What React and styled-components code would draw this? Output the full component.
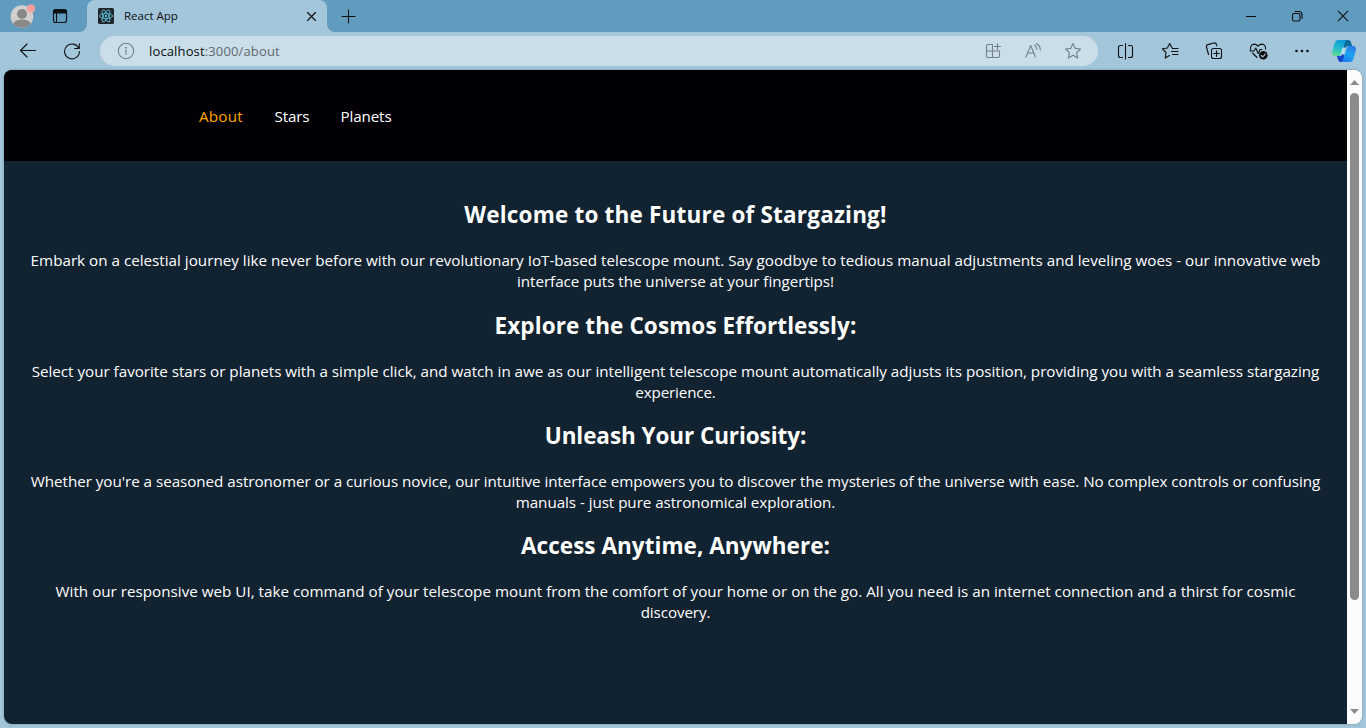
import React from "react";
import styled, { createGlobalStyle } from "styled-components";

const GlobalStyle = createGlobalStyle`
  * { box-sizing: border-box; }
  body { margin: 0; overflow: hidden; font-family: "Open Sans", "Noto Sans", sans-serif; }
`;

const Window = styled.div`
  width: 1366px;
  height: 728px;
  display: flex;
  flex-direction: column;
  background: #a3c6db;
  overflow: hidden;
`;

const TitleBar = styled.header`
  height: 32px;
  flex: none;
  display: flex;
  background: #a3c6db;
`;

const TitleLeft = styled.div`
  width: 87px;
  display: flex;
  align-items: center;
  padding-left: 10px;
  gap: 17px;
  background: #619cbf;
  border-bottom-right-radius: 8px;
`;

const TabWrap = styled.div`
  width: 240px;
  background: #619cbf;
`;

const Tab = styled.div`
  height: 32px;
  display: flex;
  align-items: center;
  padding: 0 10px 0 11px;
  background: #a3c6db;
  border-radius: 8px 8px 0 0;
`;

const TabTitle = styled.span`
  flex: 1;
  margin-left: 10px;
  padding-bottom: 2px;
  font-size: 11.5px;
  color: #0b0f12;
  white-space: nowrap;
`;

const TitleRight = styled.div`
  flex: 1;
  display: flex;
  align-items: center;
  padding: 0 17px 0 14px;
  background: #619cbf;
  border-bottom-left-radius: 8px;
`;

const WindowControls = styled.div`
  margin-left: auto;
  display: flex;
  gap: 34px;
`;

const ToolBar = styled.div`
  height: 38px;
  flex: none;
  display: flex;
  align-items: center;
  padding-left: 19px;
`;

const AddressBar = styled.div`
  width: 998px;
  height: 30px;
  flex: none;
  margin-left: 19px;
  display: flex;
  align-items: center;
  padding: 0 16px 0 17px;
  border-radius: 15px;
  background: #cadee9;
`;

const Url = styled.span`
  flex: 1;
  margin-left: 14px;
  font-size: 13px;
  letter-spacing: 0.14px;
  color: #5f686e;
  b { font-weight: 400; color: #0b0f12; }
`;

const AddressActions = styled.div`
  display: flex;
  gap: 22px;
`;

const ToolActions = styled.div`
  display: flex;
  flex: none;
  align-items: center;
  margin-left: 18px;
  gap: 24px;
`;

const Glyph = styled.svg`
  display: block;
  flex: none;
  width: ${(p) => p.$w || 18}px;
  height: ${(p) => p.$h || p.$w || 18}px;
  margin-left: ${(p) => p.$ml || 0}px;
  fill: none;
  stroke: ${(p) => p.$color || "#0c1013"};
  stroke-width: ${(p) => p.$stroke || 1.1};
  stroke-linecap: round;
  stroke-linejoin: round;
`;

const Viewport = styled.div`
  width: 1358px;
  height: 654px;
  margin-left: 4px;
  display: flex;
  border-radius: 8px;
  overflow: hidden;
  box-shadow: 0 0 3px rgba(40, 75, 95, 0.4);
`;

const Page = styled.main`
  width: 1343px;
  background: #112231;
`;

const Nav = styled.nav`
  height: 91px;
  display: flex;
  align-items: center;
  gap: 31px;
  padding: 2px 0 0 195px;
  background: #020004;
`;

const NavLink = styled.a`
  width: ${(p) => p.$width}px;
  font-size: 15.2px;
  line-height: 21px;
  letter-spacing: ${(p) => p.$spacing}px;
  white-space: nowrap;
  color: ${(p) => (p.$active ? "#ffa500" : "#fff")};
`;

const Content = styled.div`
  padding-top: 39.4px;
`;

const Section = styled.section`
  margin-bottom: 18.3px;
  text-align: center;
  color: #fff;
`;

const Heading = styled.h2`
  margin: 0 0 20px;
  font-size: 22.5px;
  font-weight: 700;
  line-height: 30px;
  letter-spacing: ${(p) => p.$spacing}px;
`;

const Paragraph = styled.p`
  margin: 0;
  font-size: 15.2px;
  line-height: 21px;
`;

const Line = styled.span`
  display: block;
  white-space: nowrap;
  letter-spacing: ${(p) => p.$spacing}px;
`;

const ScrollBar = styled.div`
  width: 15px;
  display: flex;
  flex-direction: column;
  align-items: center;
  background: #fcfcfc;
  padding: 10px 0 10px;
`;

const Thumb = styled.div`
  width: 9px;
  height: 507px;
  margin-top: 8px;
  margin-bottom: auto;
  border-radius: 5px;
  background: #8b8b8b;
`;

const Arrow = styled.svg`
  display: block;
  width: 9px;
  height: 5px;
  fill: #8b8b8b;
`;

const sections = [
  {
    title: ["Welcome to the Future of Stargazing!", 0.19],
    lines: [
      ["Embark on a celestial journey like never before with our revolutionary IoT-based telescope mount. Say goodbye to tedious manual adjustments and leveling woes - our innovative web", 0.011],
      ["interface puts the universe at your fingertips!", -0.03],
    ],
  },
  {
    title: ["Explore the Cosmos Effortlessly:", 0.1],
    lines: [
      ["Select your favorite stars or planets with a simple click, and watch in awe as our intelligent telescope mount automatically adjusts its position, providing you with a seamless stargazing", -0.011],
      ["experience.", -0.15],
    ],
  },
  {
    title: ["Unleash Your Curiosity:", -0.08],
    lines: [
      ["Whether you're a seasoned astronomer or a curious novice, our intuitive interface empowers you to discover the mysteries of the universe with ease. No complex controls or confusing", -0.035],
      ["manuals - just pure astronomical exploration.", -0.05],
    ],
  },
  {
    title: ["Access Anytime, Anywhere:", 0.04],
    lines: [
      ["With our responsive web UI, take command of your telescope mount from the comfort of your home or on the go. All you need is an internet connection and a thirst for cosmic", 0.012],
      ["discovery.", -0.1],
    ],
  },
];

const Avatar = () => (
  <Glyph $w={25} viewBox="0 0 25 25">
    <g stroke="none">
      <circle cx="12" cy="12.500" r="11.300" fill="#d2d0ce" />
      <circle cx="12" cy="10" r="5" fill="#8a8886" />
      <path d="M3.400 19.800c1.200-3 4.600-4.300 8.600-4.300s7.400 1.300 8.600 4.300a11.300 11.300 0 0 1-17.200 0z" fill="#8a8886" />
      <circle cx="21" cy="4.500" r="4" fill="#f8a09c" />
    </g>
  </Glyph>
);

const Workspaces = () => (
  <Glyph $w={16} viewBox="0 0 16 16">
    <rect x="1.500" y="1.500" width="13" height="13" rx="2.300" />
    <path d="M1.500 5V4a2.500 2.500 0 0 1 2.500-2.500h8A2.500 2.500 0 0 1 14.500 4v1z" fill="#0c1013" />
    <path d="M4.500 5v9" />
  </Glyph>
);

const ReactLogo = () => (
  <Glyph $w={16} viewBox="0 0 16 16" $color="#5bc4dc" $stroke={0.85}>
    <rect width="16" height="16" rx="1.500" fill="#20242b" stroke="none" />
    <ellipse cx="8" cy="8" rx="6.700" ry="2.600" />
    <ellipse cx="8" cy="8" rx="6.700" ry="2.600" transform="rotate(60 8 8)" />
    <ellipse cx="8" cy="8" rx="6.700" ry="2.600" transform="rotate(120 8 8)" />
    <circle cx="8" cy="8" r="1.200" fill="#5bc4dc" stroke="none" />
  </Glyph>
);

const STAR = "M9 1.500l2.300 4.900 5.200.6-3.900 3.600 1 5.300L9 13.300l-4.600 2.600 1-5.300L1.500 7l5.200-.6z";

const Copilot = () => (
  <Glyph $w={26} $ml={-5} viewBox="0 0 26 26">
    <defs>
      <linearGradient id="cpA" x1="0.600" y1="0" x2="0.300" y2="1">
        <stop offset="0" stopColor="#0f9bd8" />
        <stop offset="0.500" stopColor="#20b9cf" />
        <stop offset="1" stopColor="#5bdc8c" />
      </linearGradient>
      <linearGradient id="cpB" x1="0.700" y1="0" x2="0.300" y2="1">
        <stop offset="0" stopColor="#2b7be4" />
        <stop offset="0.500" stopColor="#1ba3f5" />
        <stop offset="1" stopColor="#1b7cf0" />
      </linearGradient>
    </defs>
    <g stroke="none">
      <path d="M12 2h5c1.800 0 2.500 1 3 2.500L21.200 8h-3.500c-2 0-2.700.6-3.200 2L12.500 9z" fill="#0a6c9c" />
      <path d="M13 24H9.500c-1.500 0-2-1-2.500-2.500L5.800 18H8.500c1.500 0 2.500-.6 3-2l2 1z" fill="#1745c8" />
      <path d="M7.500 2h9c-1.500 0-2.200 1.200-2.700 2.700L10.800 15C10.200 17.300 9.500 18 7.500 18H4.500C1.500 18 .5 16 1.300 13L3.500 5.500C4.200 3 5.500 2 7.500 2z" fill="url(#cpA)" />
      <path d="M18.500 24H9.500c1.500 0 2.200-1.200 2.700-2.700L15.400 11C16 8.700 17 8 18.500 8H21.500c3 0 4 2 3.200 5l-2.200 7.500C21.800 23 20.500 24 18.500 24z" fill="url(#cpB)" />
      <path d="M14.300 10l-3 .3-2.200 7.200c1.200-.4 1.700-1.200 2.100-2.500l1.500 1.800z" fill="#b5dcec" />
    </g>
  </Glyph>
);

const GREY = "#747f86";

export default function App() {
  return (
    <>
      <GlobalStyle />
      <Window>
        <TitleBar>
          <TitleLeft>
            <Avatar />
            <Workspaces />
          </TitleLeft>
          <TabWrap>
            <Tab>
              <ReactLogo />
              <TabTitle>React App</TabTitle>
              <Glyph $w={11} viewBox="0 0 11 11"><path d="M1.500 1.500l8 8M9.500 1.500l-8 8" /></Glyph>
            </Tab>
          </TabWrap>
          <TitleRight>
            <Glyph $w={15} viewBox="0 0 15 15"><path d="M7.500 1v13M1 7.500h13" /></Glyph>
            <WindowControls>
              <Glyph $w={12} viewBox="0 0 12 12"><path d="M1.500 6.500h9" /></Glyph>
              <Glyph $w={12} viewBox="0 0 12 12">
                <rect x="1.500" y="3.500" width="7.500" height="7.500" rx="1.500" />
                <path d="M4 1.500h4a3 3 0 0 1 3 3v4" />
              </Glyph>
              <Glyph $w={12} viewBox="0 0 12 12"><path d="M1.200 1.200l9.600 9.600M10.800 1.200L1.200 10.800" /></Glyph>
            </WindowControls>
          </TitleRight>
        </TitleBar>
        <ToolBar>
          <Glyph viewBox="0 0 18 18"><path d="M16.500 8.500H1.500M8 2L1.500 8.500 8 15" /></Glyph>
          <Glyph $ml={26} viewBox="0 0 18 18"><path d="M15.800 6.500A7.400 7.400 0 1 0 16.400 9.500M16.300 1.800v4.700h-4.700" /></Glyph>
          <AddressBar>
            <Glyph viewBox="0 0 18 18" $color={GREY}>
              <circle cx="9" cy="9" r="7.700" />
              <path d="M9 8.300v4.200" />
              <circle cx="9" cy="5.700" r="0.400" fill={GREY} />
            </Glyph>
            <Url><b>localhost</b>:3000/about</Url>
            <AddressActions>
              <Glyph viewBox="0 0 18 18" $color={GREY}>
                <path d="M8.500 2.500H4A1.500 1.500 0 0 0 2.500 4v10A1.500 1.500 0 0 0 4 15.500h10a1.500 1.500 0 0 0 1.500-1.500V9H2.500M8.500 2.500v13M13.500 1.500v6M10.500 4.500h6" />
              </Glyph>
              <Glyph viewBox="0 0 18 18" $color={GREY}>
                <path d="M2 15L6.700 3.500 11.400 15M3.700 11h6M10.500 3.300c1.500.8 2.200 2.200 2.200 4M12 1.500c2.700 1 4.200 3.200 4.300 6.500" />
              </Glyph>
              <Glyph viewBox="0 0 18 18" $color={GREY}><path d={STAR} /></Glyph>
            </AddressActions>
          </AddressBar>
          <ToolActions>
            <Glyph $w={20} viewBox="0 0 20 20">
              <path d="M6.500 4.500H4.500A2 2 0 0 0 2.500 6.500v8a2 2 0 0 0 2 2h2M12.500 4.500h2a2 2 0 0 1 2 2v8a2 2 0 0 1-2 2h-2M9.500 2.500v15.500" />
            </Glyph>
            <Glyph $w={20} viewBox="0 0 20 20">
              <path d="M12 6.800L9.700 2.500 7.400 7 2.400 7.800 6 11.500 5.200 17l4.300-2.400M12.500 7.500H18M11.500 10.500H18M12.500 13.500H18" />
            </Glyph>
            <Glyph $w={20} viewBox="0 0 20 20">
              <rect x="7.500" y="7.500" width="10" height="10" rx="2" />
              <path d="M12.500 9.800v5.400M9.800 12.500h5.400M4.500 13.500L2.500 6a2 2 0 0 1 1.400-2.400L10 2a2 2 0 0 1 2.400 1.400l.4 1.400" />
            </Glyph>
            <Glyph $w={20} viewBox="0 0 20 20">
              <path d="M2.800 9c-1-2.600.3-5.700 3.200-5.900 1.700 0 3 .8 4 2 1-1.200 2.300-2 4-2 2.500.1 4 2.500 3.500 5M2 10h4l1.800-3 2.400 5.500L12 8.500h2M4.500 12l4.500 4.500" />
              <circle cx="15.300" cy="14.300" r="4.300" fill="#0c1013" stroke="none" />
              <path d="M13.300 14.500l1.400 1.400 2.700-2.800" stroke="#a3c6db" />
            </Glyph>
            <Glyph $w={20} viewBox="0 0 20 20">
              <g fill="#0c1013" stroke="none">
                <circle cx="4.500" cy="10" r="1.300" /><circle cx="10" cy="10" r="1.300" /><circle cx="15.500" cy="10" r="1.300" />
              </g>
            </Glyph>
            <Copilot />
          </ToolActions>
        </ToolBar>
        <Viewport>
          <Page>
            <Nav>
              <NavLink $active $width={44.5} $spacing={0.2}>About</NavLink>
              <NavLink $width={35} $spacing={-0.15}>Stars</NavLink>
              <NavLink $width={51} $spacing={-0.13}>Planets</NavLink>
            </Nav>
            <Content>
              {sections.map((s) => (
                <Section key={s.title[0]}>
                  <Heading $spacing={s.title[1]}>{s.title[0]}</Heading>
                  <Paragraph>
                    {s.lines.map(([text, spacing]) => (
                      <Line key={text} $spacing={spacing}>{text}</Line>
                    ))}
                  </Paragraph>
                </Section>
              ))}
            </Content>
          </Page>
          <ScrollBar>
            <Arrow viewBox="0 0 9 5"><path d="M4.500 0L9 5H0z" /></Arrow>
            <Thumb />
            <Arrow viewBox="0 0 9 5"><path d="M0 0h9L4.500 5z" /></Arrow>
          </ScrollBar>
        </Viewport>
      </Window>
    </>
  );
}
